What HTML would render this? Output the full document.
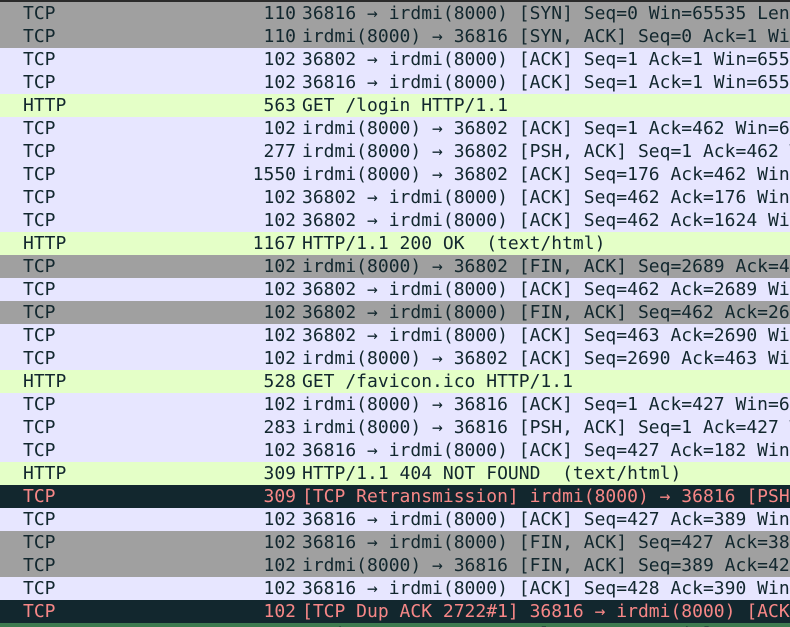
<!DOCTYPE html>
<html><head><meta charset="utf-8"><style>
html,body{margin:0;padding:0;width:790px;height:627px;overflow:hidden;background:#e7e6ff}
body{font-family:"DejaVu Sans Mono","Liberation Mono",monospace;font-size:18px;color:#12272e}
.top{height:2px;background:#2b2b2b}
.r{position:relative;height:23px;line-height:23px;white-space:pre;overflow:hidden}
.p{position:absolute;left:23px}
.l{position:absolute;right:494px}
.i{position:absolute;left:302px}
.g{background:#a0a0a0}.v{background:#e7e6ff}.h{background:#e4ffc7}
.d{background:#12272e;color:#f78787}
.e{background:#3d7a4f;color:#12272e}
</style></head><body>
<div class="top"></div>
<div class="r g"><span class="p">TCP</span><span class="l">110</span><span class="i">36816 → irdmi(8000) [SYN] Seq=0 Win=65535 Len=0</span></div>
<div class="r g"><span class="p">TCP</span><span class="l">110</span><span class="i">irdmi(8000) → 36816 [SYN, ACK] Seq=0 Ack=1 Win=65535</span></div>
<div class="r v"><span class="p">TCP</span><span class="l">102</span><span class="i">36802 → irdmi(8000) [ACK] Seq=1 Ack=1 Win=65535</span></div>
<div class="r v"><span class="p">TCP</span><span class="l">102</span><span class="i">36816 → irdmi(8000) [ACK] Seq=1 Ack=1 Win=65535</span></div>
<div class="r h"><span class="p">HTTP</span><span class="l">563</span><span class="i">GET /login HTTP/1.1</span></div>
<div class="r v"><span class="p">TCP</span><span class="l">102</span><span class="i">irdmi(8000) → 36802 [ACK] Seq=1 Ack=462 Win=65535</span></div>
<div class="r v"><span class="p">TCP</span><span class="l">277</span><span class="i">irdmi(8000) → 36802 [PSH, ACK] Seq=1 Ack=462 Win=</span></div>
<div class="r v"><span class="p">TCP</span><span class="l">1550</span><span class="i">irdmi(8000) → 36802 [ACK] Seq=176 Ack=462 Win=655</span></div>
<div class="r v"><span class="p">TCP</span><span class="l">102</span><span class="i">36802 → irdmi(8000) [ACK] Seq=462 Ack=176 Win=655</span></div>
<div class="r v"><span class="p">TCP</span><span class="l">102</span><span class="i">36802 → irdmi(8000) [ACK] Seq=462 Ack=1624 Win=65</span></div>
<div class="r h"><span class="p">HTTP</span><span class="l">1167</span><span class="i">HTTP/1.1 200 OK  (text/html)</span></div>
<div class="r g"><span class="p">TCP</span><span class="l">102</span><span class="i">irdmi(8000) → 36802 [FIN, ACK] Seq=2689 Ack=462</span></div>
<div class="r v"><span class="p">TCP</span><span class="l">102</span><span class="i">36802 → irdmi(8000) [ACK] Seq=462 Ack=2689 Win=65</span></div>
<div class="r g"><span class="p">TCP</span><span class="l">102</span><span class="i">36802 → irdmi(8000) [FIN, ACK] Seq=462 Ack=2689</span></div>
<div class="r v"><span class="p">TCP</span><span class="l">102</span><span class="i">36802 → irdmi(8000) [ACK] Seq=463 Ack=2690 Win=65</span></div>
<div class="r v"><span class="p">TCP</span><span class="l">102</span><span class="i">irdmi(8000) → 36802 [ACK] Seq=2690 Ack=463 Win=65</span></div>
<div class="r h"><span class="p">HTTP</span><span class="l">528</span><span class="i">GET /favicon.ico HTTP/1.1</span></div>
<div class="r v"><span class="p">TCP</span><span class="l">102</span><span class="i">irdmi(8000) → 36816 [ACK] Seq=1 Ack=427 Win=65535</span></div>
<div class="r v"><span class="p">TCP</span><span class="l">283</span><span class="i">irdmi(8000) → 36816 [PSH, ACK] Seq=1 Ack=427 Win=</span></div>
<div class="r v"><span class="p">TCP</span><span class="l">102</span><span class="i">36816 → irdmi(8000) [ACK] Seq=427 Ack=182 Win=655</span></div>
<div class="r h"><span class="p">HTTP</span><span class="l">309</span><span class="i">HTTP/1.1 404 NOT FOUND  (text/html)</span></div>
<div class="r d"><span class="p">TCP</span><span class="l">309</span><span class="i">[TCP Retransmission] irdmi(8000) → 36816 [PSH, ACK]</span></div>
<div class="r v"><span class="p">TCP</span><span class="l">102</span><span class="i">36816 → irdmi(8000) [ACK] Seq=427 Ack=389 Win=655</span></div>
<div class="r g"><span class="p">TCP</span><span class="l">102</span><span class="i">36816 → irdmi(8000) [FIN, ACK] Seq=427 Ack=389</span></div>
<div class="r g"><span class="p">TCP</span><span class="l">102</span><span class="i">irdmi(8000) → 36816 [FIN, ACK] Seq=389 Ack=428</span></div>
<div class="r v"><span class="p">TCP</span><span class="l">102</span><span class="i">36816 → irdmi(8000) [ACK] Seq=428 Ack=390 Win=655</span></div>
<div class="r d"><span class="p">TCP</span><span class="l">102</span><span class="i">[TCP Dup ACK 2722#1] 36816 → irdmi(8000) [ACK] Se</span></div>
<div class="r e"><span class="p" style="left:23px">200.11</span><span class="l">92</span><span class="i">Active  SN=15  FN=0  Flags=0x     Dialog  TCP</span></div>
</body></html>
